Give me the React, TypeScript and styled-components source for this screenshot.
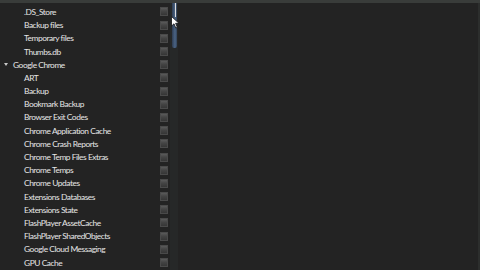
import styled, { createGlobalStyle } from "styled-components";

const GlobalStyle = createGlobalStyle`
  html, body {
    margin: 0;
    padding: 0;
    background: #232323;
    overflow: hidden;
  }
`;

const Window = styled.div`
  width: 480px;
  height: 270px;
  display: flex;
  flex-direction: column;
  background: #232323;
  position: relative;
  font-family: Lato, "Noto Sans", sans-serif;
`;

const TopStrip = styled.div`
  height: 3px;
  background: #393c3a;
  flex-shrink: 0;
`;

const Body = styled.div`
  flex: 1;
  display: flex;
  overflow: hidden;
`;

const Tree = styled.ul`
  list-style: none;
  margin: 0;
  padding: 2.4px 0 0 0;
  width: 170px;
  flex-shrink: 0;
`;

const Row = styled.li<{ $depth: number }>`
  height: 13.2px;
  display: flex;
  align-items: center;
  padding-left: ${p => (p.$depth === 0 ? 4 : 24)}px;
  padding-right: 2px;
  color: #e6e6e6;
  font-size: 8.4px;
  letter-spacing: -0.45px;
  white-space: nowrap;
`;

const Arrow = styled.span`
  width: 0;
  height: 0;
  border-left: 2.5px solid transparent;
  border-right: 2.5px solid transparent;
  border-top: 3.5px solid #c8c8c8;
  margin-right: 5px;
`;

const Label = styled.span`
  flex: 1;
`;

const Check = styled.span`
  width: 8px;
  height: 9px;
  box-sizing: border-box;
  border: 1px solid #4a4a4a;
  background: linear-gradient(#5a5a5a, #444 45%, #363636);
`;

const ScrollTrack = styled.div`
  width: 8px;
  flex-shrink: 0;
  background: #262828;
  position: relative;
`;

const Thumb = styled.div`
  margin: -3px 1px 0 2px;
  height: 48px;
  border-radius: 0 0 2px 2px;
  background: linear-gradient(90deg, #2f3d52, #4a6485 60%, #34445a);
`;

const Line = styled.div`
  position: absolute;
  left: 5px;
  top: -3px;
  width: 1px;
  height: 17px;
  background: #dcdcdc;
`;

const Rest = styled.div`
  flex: 1;
  border-right: 2px solid #2c2e2d;
`;

const Cursor = styled.svg`
  position: absolute;
  left: 171px;
  top: 16px;
`;

type Item = { name: string; depth: number; open?: boolean };

const items: Item[] = [
  { name: ".DS_Store", depth: 1 },
  { name: "Backup files", depth: 1 },
  { name: "Temporary files", depth: 1 },
  { name: "Thumbs.db", depth: 1 },
  { name: "Google Chrome", depth: 0, open: true },
  { name: "ART", depth: 1 },
  { name: "Backup", depth: 1 },
  { name: "Bookmark Backup", depth: 1 },
  { name: "Browser Exit Codes", depth: 1 },
  { name: "Chrome Application Cache", depth: 1 },
  { name: "Chrome Crash Reports", depth: 1 },
  { name: "Chrome Temp Files Extras", depth: 1 },
  { name: "Chrome Temps", depth: 1 },
  { name: "Chrome Updates", depth: 1 },
  { name: "Extensions Databases", depth: 1 },
  { name: "Extensions State", depth: 1 },
  { name: "FlashPlayer AssetCache", depth: 1 },
  { name: "FlashPlayer SharedObjects", depth: 1 },
  { name: "Google Cloud Messaging", depth: 1 },
  { name: "GPU Cache", depth: 1 },
];

export default function App() {
  return (
    <>
      <GlobalStyle />
      <Window>
        <TopStrip />
        <Body>
          <Tree>
            {items.map(item => (
              <Row key={item.name} $depth={item.depth}>
                {item.open && <Arrow />}
                <Label>{item.name}</Label>
                <Check />
              </Row>
            ))}
          </Tree>
          <ScrollTrack>
            <Thumb />
            <Line />
          </ScrollTrack>
          <Rest />
        </Body>
        <Cursor width="9" height="13" viewBox="0 0 9 13">
          <path d="M0.5 0.5 L0.5 10 L3 7.8 L4.8 12 L6.3 11.3 L4.6 7.3 L8 7.3 Z" fill="#ffffff" stroke="#111" strokeWidth="0.8" />
        </Cursor>
      </Window>
    </>
  );
}
